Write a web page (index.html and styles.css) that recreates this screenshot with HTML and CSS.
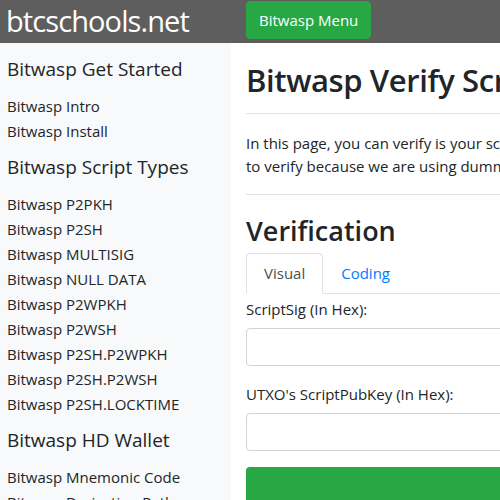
FILE: index.html
```html
<!DOCTYPE html>
<html>
<head>
<meta charset="utf-8">
<link rel="stylesheet" href="styles.css">
</head>
<body>
<header class="topbar">
  <div class="brand">btcschools.net</div>
  <button class="menu-btn">Bitwasp Menu</button>
</header>
<div class="layout">
  <nav class="sidebar">
    <h5 class="side-title">Bitwasp Get Started</h5>
    <a class="side-link">Bitwasp Intro</a>
    <a class="side-link">Bitwasp Install</a>
    <h5 class="side-title">Bitwasp Script Types</h5>
    <a class="side-link">Bitwasp P2PKH</a>
    <a class="side-link">Bitwasp P2SH</a>
    <a class="side-link">Bitwasp MULTISIG</a>
    <a class="side-link">Bitwasp NULL DATA</a>
    <a class="side-link">Bitwasp P2WPKH</a>
    <a class="side-link">Bitwasp P2WSH</a>
    <a class="side-link">Bitwasp P2SH.P2WPKH</a>
    <a class="side-link">Bitwasp P2SH.P2WSH</a>
    <a class="side-link">Bitwasp P2SH.LOCKTIME</a>
    <h5 class="side-title">Bitwasp HD Wallet</h5>
    <a class="side-link">Bitwasp Mnemonic Code</a>
    <a class="side-link">Bitwasp Derivation Path</a>
  </nav>
  <main class="content">
    <h1 class="page-title">Bitwasp Verify Script</h1>
    <hr class="rule">
    <p class="intro">In this page, you can verify is your script valid or not. You don't need real transaction<br>to verify because we are using dummy transaction.</p>
    <hr class="rule">
    <h2 class="section-title">Verification</h2>
    <ul class="tabs">
      <li class="tab active">Visual</li>
      <li class="tab">Coding</li>
    </ul>
    <label class="field-label">ScriptSig (In Hex):</label>
    <input class="field" type="text">
    <label class="field-label">UTXO's ScriptPubKey (In Hex):</label>
    <input class="field" type="text">
    <button class="submit">Verify</button>
  </main>
</div>
</body>
</html>
```
FILE: styles.css
```css
* { box-sizing: border-box; }
html, body { margin: 0; padding: 0; }
body {
  font-family: "Open Sans", "Noto Sans", sans-serif;
  color: #212529;
  background: #fff;
  overflow: hidden;
  width: 500px;
  height: 500px;
}
.topbar {
  display: flex;
  align-items: flex-start;
  height: 43px;
  background: #5e5e5e;
}
.brand {
  width: 231px;
  padding-left: 6px;
  color: #fff;
  font-size: 29px;
  line-height: 42px;
  letter-spacing: -0.9px;
}
.menu-btn {
  margin: 1px 0 0 15px;
  height: 38px;
  padding: 0 12px;
  background: #28a745;
  color: #fff;
  border: 1px solid #28a745;
  border-radius: 4px;
  font-family: inherit;
  font-size: 15px;
}
.layout {
  display: flex;
  height: 457px;
}
.sidebar {
  width: 231px;
  flex: none;
  background: #f8f9fa;
  padding: 12px 0 0 7px;
  display: flex;
  flex-direction: column;
}
.side-title {
  margin: 0 0 11px;
  font-size: 19px;
  font-weight: 400;
  line-height: 28px;
}
.side-link {
  font-size: 15px;
  line-height: 25px;
  color: #212529;
}
.side-link + .side-title { margin-top: 9px; }
.content {
  flex: 1;
  min-width: 0;
  padding: 0 0 0 15px;
  white-space: nowrap;
  overflow: hidden;
}
.page-title {
  margin: 16px 0 0;
  font-size: 31px;
  font-weight: 600;
  line-height: 42px;
  letter-spacing: -0.4px;
}
.rule {
  margin: 12px 0;
  border: 0;
  border-top: 1px solid #e2e3e5;
}
.intro {
  margin: 0;
  font-size: 15px;
  line-height: 23px;
  white-space: nowrap;
  padding-top: 6px;
  padding-bottom: 4px;
}
.section-title {
  margin: 18px 0 4px;
  font-size: 27px;
  font-weight: 600;
  line-height: 36px;
}
.tabs {
  display: flex;
  list-style: none;
  margin: 0;
  padding: 0;
  border-bottom: 1px solid #dee2e6;
}
.tab {
  padding: 0 17px;
  line-height: 39px;
  font-size: 15px;
  color: #007bff;
  border: 1px solid transparent;
  border-top-left-radius: 4px;
  border-top-right-radius: 4px;
  margin-bottom: -1px;
}
.tab.active {
  color: #495057;
  border-color: #dee2e6 #dee2e6 #fff;
  background: #fff;
}
.field-label {
  display: block;
  font-size: 15px;
  line-height: 24px;
  margin-top: 3px;
  margin-bottom: 7px;
}
.field {
  display: block;
  width: 300px;
  height: 38px;
  border: 1px solid #ced4da;
  border-radius: 4px;
  margin-bottom: 16px;
}
.submit {
  display: block;
  width: 300px;
  height: 70px;
  margin-top: 0;
  padding-top: 36px;
  background: #28a745;
  border: 0;
  border-radius: 4px;
  color: #fff;
  font-family: inherit;
  font-size: 18px;
}
```
